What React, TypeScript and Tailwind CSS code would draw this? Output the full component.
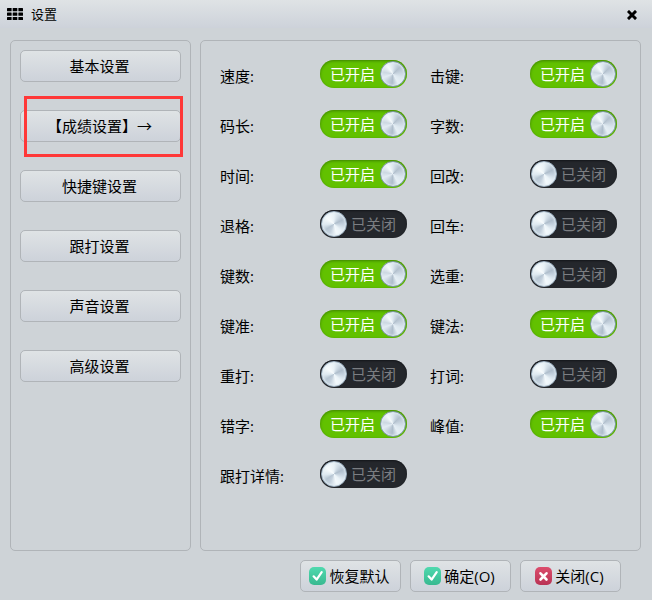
import { useState } from "react"
import type { ReactNode } from "react"

const tabs = ["基本设置", "成绩设置", "快捷键设置", "跟打设置", "声音设置", "高级设置"]

const defaults = [
  { name: "速度", on: true },
  { name: "击键", on: true },
  { name: "码长", on: true },
  { name: "字数", on: true },
  { name: "时间", on: true },
  { name: "回改", on: false },
  { name: "退格", on: false },
  { name: "回车", on: false },
  { name: "键数", on: true },
  { name: "选重", on: false },
  { name: "键准", on: true },
  { name: "键法", on: true },
  { name: "重打", on: false },
  { name: "打词", on: false },
  { name: "错字", on: true },
  { name: "峰值", on: true },
  { name: "跟打详情", on: false },
]

const buttonStyle =
  "flex h-8 items-center justify-center whitespace-nowrap rounded-[5px] border border-[#b0b4b8] bg-linear-to-b from-[#dfe3e5] to-[#cdd2da] pr-[2px] hover:from-[#e8ebed]"

function GridIcon() {
  return (
    <svg width="16" height="12" viewBox="0 0 16 12" aria-hidden="true">
      {[0, 5.7, 11.4].map((x) =>
        [0, 4.5, 9].map((y) => <rect key={`${x}-${y}`} x={x} y={y} width="4.6" height="3.2" rx="0.5" />)
      )}
    </svg>
  )
}

function CheckIcon() {
  return (
    <svg width="17" height="18" viewBox="0 0 17 18" className="shrink-0" aria-hidden="true">
      <defs>
        <linearGradient id="check-fill" x1="0" y1="0" x2="0" y2="1">
          <stop offset="0" stopColor="#4fd9ae" />
          <stop offset="1" stopColor="#38b990" />
        </linearGradient>
      </defs>
      <rect width="17" height="18" rx="5" fill="url(#check-fill)" />
      <path d="M4.6 9.3 7.6 12.6 12.7 5.2" fill="none" stroke="#fff" strokeWidth="2.2" strokeLinecap="round" strokeLinejoin="round" />
    </svg>
  )
}

function CrossIcon() {
  return (
    <svg width="17" height="18" viewBox="0 0 17 18" className="shrink-0" aria-hidden="true">
      <defs>
        <linearGradient id="cross-fill" x1="0" y1="0" x2="0" y2="1">
          <stop offset="0" stopColor="#dc4d6c" />
          <stop offset="1" stopColor="#b93354" />
        </linearGradient>
      </defs>
      <rect width="17" height="18" rx="5" fill="url(#cross-fill)" />
      <path d="M5.5 6.3 11.5 12.5M11.5 6.3 5.5 12.5" fill="none" stroke="#fff" strokeWidth="2.6" strokeLinecap="round" />
    </svg>
  )
}

function Knob({ on }: { on: boolean }) {
  // the brushed metal catches the light differently on each side
  const metal = on
    ? "bg-[conic-gradient(#dbe6ee,#b3c1ce_45deg,#c8d4df_80deg,#dce7ef_115deg,#e6eff5_150deg,#aebdcb_185deg,#c3d0dc_215deg,#e3ecf3_250deg,#ccd8e2_280deg,#f5fafc_325deg,#dbe6ee)] border-[#7d95a6]"
    : "bg-[conic-gradient(#e8f1f6,#c9d6e1_35deg,#aebdcb_65deg,#c6d3df_95deg,#eaf3f8_135deg,#f3f9fc_165deg,#c4d1dd_205deg,#b6c5d2_235deg,#dde8f0_265deg,#f8fcfd_310deg,#e8f1f6)] border-[#9fb3c4]"
  return <span className={`size-[26px] shrink-0 rounded-full border shadow-[inset_0_0_2px_1px_#e2edf4] ${metal}`} />
}

function Switch({ name, on, onChange }: { name: string; on: boolean; onChange: () => void }) {
  return (
    <label className="flex h-[50px] cursor-pointer items-center">
      <span className="w-[100px] pt-1">{name}:</span>
      <input type="checkbox" role="switch" className="peer sr-only" checked={on} onChange={onChange} />
      {on ? (
        <span className="flex h-7 w-[87px] items-center justify-between rounded-full bg-[#62c100] pr-px pl-[10px] text-white shadow-[inset_0_1px_3px_#3d8200] peer-focus-visible:outline-2">
          已开启
          <Knob on />
        </span>
      ) : (
        <span className="flex h-7 w-[87px] items-center justify-between rounded-full bg-[#24272c] pr-[11px] pl-px text-[#7b7e82] shadow-[inset_0_1px_2px_#14161a] peer-focus-visible:outline-2">
          <Knob on={false} />
          已关闭
        </span>
      )}
    </label>
  )
}

function FooterButton({ icon, children, onClick }: { icon: ReactNode; children: ReactNode; onClick?: () => void }) {
  return (
    <button type="button" onClick={onClick} className={`${buttonStyle} w-[101px] gap-[3px]`}>
      {icon}
      {children}
    </button>
  )
}

export default function App() {
  const [active, setActive] = useState(1)
  const [options, setOptions] = useState(defaults)

  const toggle = (index: number) => {
    setOptions(options.map((o, i) => (i === index ? { ...o, on: !o.on } : o)))
  }

  return (
    <div className="flex min-h-screen flex-col bg-[#ced3d7] font-['Open_Sans','Noto_Sans_CJK_SC',sans-serif] text-[15px] leading-6 text-black">
      <header className="flex h-[28px] items-center bg-linear-to-b from-[#dfe3e5] to-[#cdd2da] pr-[15px] pl-[7px]">
        <GridIcon />
        <h1 className="ml-2 text-[13px]">设置</h1>
        <button type="button" aria-label="关闭窗口" className="ml-auto pt-0.5">
          <svg width="10" height="10" viewBox="0 0 10 10" aria-hidden="true">
            <path d="M2 2 8 8M8 2 2 8" stroke="#000" strokeWidth="3" strokeLinecap="square" />
          </svg>
        </button>
      </header>

      <main className="mt-3 mr-[11px] ml-[10px] flex flex-1 gap-[9px]">
        <nav className="flex w-[181px] shrink-0 flex-col gap-7 rounded-[5px] border border-[#b0b4b8] p-[9px]">
          {tabs.map((tab, i) => (
            <div key={tab} className="relative">
              <button type="button" onClick={() => setActive(i)} className={`${buttonStyle} w-full`}>
                {i === active ? `【${tab}】→` : tab}
              </button>
              {i === active && (
                <span className="pointer-events-none absolute -top-[14px] -right-[2px] -bottom-[15px] left-1 border-3 border-[#ff3838]" />
              )}
            </div>
          ))}
        </nav>

        <section className="flex-1 rounded-[5px] border border-[#b0b4b8] pt-2 pl-[19px]">
          <div className="grid grid-cols-[repeat(auto-fill,210px)]">
            {options.map((option, i) => (
              <Switch key={option.name} name={option.name} on={option.on} onChange={() => toggle(i)} />
            ))}
          </div>
        </section>
      </main>

      <footer className="flex justify-end gap-[9px] pt-[9px] pr-[31px] pb-2">
        <FooterButton icon={<CheckIcon />} onClick={() => setOptions(defaults)}>
          恢复默认
        </FooterButton>
        <FooterButton icon={<CheckIcon />}>确定(O)</FooterButton>
        <FooterButton icon={<CrossIcon />}>关闭(C)</FooterButton>
      </footer>
    </div>
  )
}
